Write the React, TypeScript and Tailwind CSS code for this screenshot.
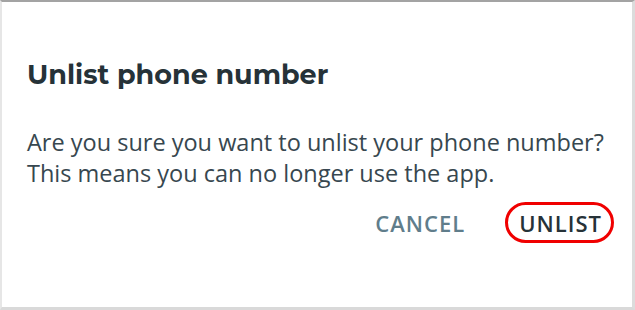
import React from 'react';

const App = () => {
  return (
    <div className="w-[635px] h-[310px] bg-white">
      <div className="w-full h-full border-t-2 border-t-[#a3a3a3] border-l-2 border-l-[#e6e6e6] border-r-[3px] border-r-[#dcdcdc] border-b-[3px] border-b-[#d9d9d9] pl-[25px] pr-[18px] pt-[53px] font-['Open_Sans',sans-serif]">
        <h1 className="text-[27px] leading-[40px] font-bold text-[#263238] font-['Montserrat','Open_Sans',sans-serif]">
          Unlist phone number
        </h1>
        <p className="mt-[32px] text-[23.5px] leading-[31px] text-[#37474f]">
          Are you sure you want to unlist your phone number?
          <br />
          This means you can no longer use the app.
        </p>
        <div className="flex justify-end items-center gap-[40px] mt-[13px]">
          <button className="text-[22px] leading-[28px] font-semibold tracking-[1px] text-[#607d8b] uppercase">
            Cancel
          </button>
          <button className="text-[22px] leading-[28px] font-semibold tracking-[1px] text-[#263238] uppercase border-[3px] border-[#f00000] rounded-full pl-[11px] pr-[9px] py-[3.5px]">
            Unlist
          </button>
        </div>
      </div>
    </div>
  );
};

export default App;
